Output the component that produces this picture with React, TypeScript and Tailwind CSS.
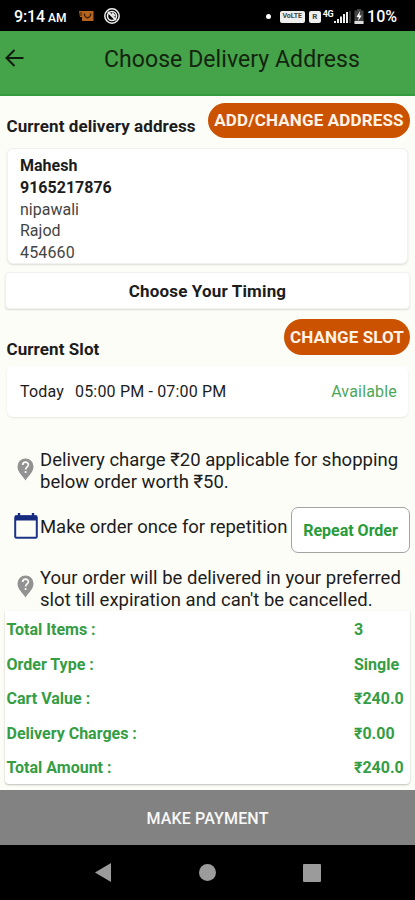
import React from "react";

function HelpPin() {
  return (
    <svg viewBox="0 0 17 23" className="h-[23px] w-[17px] shrink-0">
      <path d="M8.5 0.5A8 8 0 0 0 .5 8.500C.5 14 5 17 8.500 22.600 12 17 16.500 14 16.500 8.500A8 8 0 0 0 8.500.500Z" fill="#929292" />
      <path d="M5.700 7.100C5.700 3.200 11.500 3.200 11.400 6.800C11.300 8.900 8.600 8.900 8.600 11.600" fill="none" stroke="#fdfdf8" strokeWidth="1.700" />
      <circle cx="8.600" cy="14" r="1.100" fill="#fdfdf8" />
    </svg>
  );
}

function Calendar() {
  return (
    <svg viewBox="0 0 24 26" className="mt-[6px] h-[26px] w-6 shrink-0">
      <path d="M5 0V4M19 0V4" stroke="#172b7e" strokeWidth="2.400" />
      <rect x="1.200" y="3.200" width="21.600" height="21.600" rx="1.200" fill="#fdfdf8" stroke="#1c3387" strokeWidth="2" />
      <path d="M1 2.500H23V7.500H1Z" fill="#172b7e" />
    </svg>
  );
}

function StatusBar() {
  return (
    <div className="flex h-[31px] items-center bg-black pt-[2px] pr-[18px] pl-3.5 text-white">
      <span className="text-[16px] font-medium tracking-[-0.1px]">9:14</span>
      <span className="ml-[3px] pt-[3px] text-[12px] font-medium">AM</span>
      <svg viewBox="0 0 15 12" className="-mt-px ml-[12px] h-3 w-[15px]">
        <path d="M0 1H14.500V11H3V7H1Z" fill="#b5651d" />
        <path d="M1 3H3M1 5H3" stroke="#3b1c00" />
        <path d="M5.500 3.500V5.500Q8.500 10 11.500 5.500V3.500" fill="none" stroke="#3b1c00" strokeWidth="1.300" />
      </svg>
      <svg viewBox="0 0 16 16" className="-mt-px ml-2.5 h-4 w-4">
        <circle cx="8" cy="8" r="7.200" fill="none" stroke="#eee" strokeWidth="1.500" />
        <circle cx="8" cy="8" r="4.500" fill="none" stroke="#eee" strokeWidth="1.600" />
        <path d="M4 4L12 12M8 5L11 8" stroke="#eee" strokeWidth="1.800" />
      </svg>
      <span className="-mt-px ml-auto h-[5px] w-[5px] rounded-full bg-white" />
      <span className="ml-[9px] flex h-3 w-[25px] items-center justify-center rounded-[2px] bg-[#eee] text-[7px] font-bold text-[#444]">VoLTE</span>
      <span className="ml-1 flex h-3 w-3 items-center justify-center rounded-[2px] bg-[#eee] text-[8px] font-bold text-[#444]">R</span>
      <span className="ml-0.5 -mt-1 text-[9px] font-bold tracking-[-0.5px]">4G</span>
      <svg viewBox="0 0 17 12" className="ml-px h-3 w-[17px]">
        <path d="M1 10V12M4 8V12M7 5.500V12M10 3V12M13 1V12" stroke="#eee" strokeWidth="2" />
        <path d="M16 0V12" stroke="#444" strokeWidth="1.500" />
      </svg>
      <svg viewBox="0 0 10 15" className="ml-[3px] h-[15px] w-2.5">
        <path d="M3 0H7V1.500H9.500V15H.5V1.500H3Z" fill="#444" />
        <path d="M.5 12H9.500V15H.5Z" fill="#ddd" />
        <path d="M6 2L2.500 8H4.800L4 12L7.800 6.500H5.500Z" fill="#fff" />
      </svg>
      <span className="ml-[3px] text-[16px] font-medium">10%</span>
    </div>
  );
}

const card = "border border-[#f1f1ed] bg-white shadow-[0_1px_2px_rgba(0,0,0,0.13)]";

const totals = [
  ["Total Items :", "3"],
  ["Order Type :", "Single"],
  ["Cart Value :", "₹240.0"],
  ["Delivery Charges :", "₹0.00"],
  ["Total Amount :", "₹240.0"],
];

export default function App() {
  return (
    <div className="flex h-[900px] w-[415px] flex-col overflow-hidden whitespace-nowrap bg-[#fdfdf8] font-[Roboto,'Noto_Sans',sans-serif] text-[#1c1c1c]">
      <StatusBar />
      <header className="flex h-[65px] items-center border-b-2 border-[#359b40] bg-[#45a349] pb-[6px] pl-[5px]">
        <svg viewBox="0 0 19 18" className="-mt-[3px] h-[18px] w-[19px]">
          <path d="M18.500 9H2M9.500 1L1.500 9L9.500 17" fill="none" stroke="#101b10" strokeWidth="2" />
        </svg>
        <h1 className="ml-[80px] pt-px text-[23px] tracking-[0.07px] text-[#14240f]">Choose Delivery Address</h1>
      </header>

      <main className="flex h-[694px] flex-col">
        <div className="flex h-[52px] justify-between pt-[7px] pr-[5px] pl-[6.5px]">
          <h2 className="mt-[11px] text-[17px] leading-6 font-bold tracking-[0.08px]">Current delivery address</h2>
          <button className="h-[35px] w-[202px] rounded-full bg-[#cb5200] text-[17px] font-bold tracking-[0.15px] text-[#fff3e7]">ADD/CHANGE ADDRESS</button>
        </div>
        <section className={`ml-[7px] h-[116px] w-[401px] rounded-[6px] pt-1.5 pl-3 text-[16px] leading-[21.8px] ${card}`}>
          <p className="font-bold">Mahesh</p>
          <p className="font-bold">9165217876</p>
          <p className="text-[#444]">nipawali</p>
          <p className="text-[#444]">Rajod</p>
          <p className="tracking-[0.15px] text-[#444]">454660</p>
        </section>
        <button className={`mt-2 ml-[5px] h-[37px] w-[405px] rounded-[4px] pt-[2px] text-[17px] font-bold tracking-[0.16px] ${card}`}>Choose Your Timing</button>

        <div className="flex h-[57px] justify-between pt-[10px] pr-[5px] pl-[6.5px]">
          <h2 className="mt-[18px] text-[17px] leading-6 font-bold tracking-[0.08px]">Current Slot</h2>
          <button className="h-[36px] w-[126px] rounded-full bg-[#cb5200] pt-[2px] text-[17px] font-bold tracking-[0.1px] text-[#fff3e7]">CHANGE SLOT</button>
        </div>
        <section className="ml-[7px] flex h-[51px] w-[401px] items-center rounded-[6px] bg-white pr-[11px] pl-[13px] text-[16px] tracking-[0.18px] shadow-[0_1px_2px_rgba(0,0,0,0.09)]">
          <span>Today</span>
          <span className="ml-[11px]">05:00 PM - 07:00 PM</span>
          <span className="ml-auto text-[#4ba75a]">Available</span>
        </section>

        <div className="mt-[32px] flex h-[44px] pl-[17px]">
          <div className="mt-[9px]"><HelpPin /></div>
          <p className="ml-[6px] text-[18.5px] leading-[22px]">Delivery charge ₹20 applicable for shopping<br />below order worth ₹50.</p>
        </div>
        <div className="mt-[14px] flex h-[46px] pl-[14px]">
          <Calendar />
          <p className="mt-[9px] ml-[2px] w-[251px] text-[18.5px] leading-[22px] tracking-[-0.03px]">Make order once for repetition</p>
          <button className="h-[46px] w-[119px] rounded-[7px] border border-[#a3a3a3] bg-white pt-[2px] text-[16px] font-bold text-[#289b3b]">Repeat Order</button>
        </div>
        <div className="mt-[14px] flex h-[42px] pl-[17px]">
          <div className="mt-2"><HelpPin /></div>
          <p className="ml-[6px] text-[18.5px] leading-[22px] tracking-[0.02px]">Your order will be delivered in your preferred<br />slot till expiration and can't be cancelled.</p>
        </div>

        <section className="mt-[2px] ml-[5px] h-[173px] w-[405px] rounded-b-[4px] pt-[2px] pl-[1.5px] text-[16px] font-bold text-[#359d43] shadow-[0_1px_2px_rgba(0,0,0,0.25)] bg-white">
          {totals.map(([label, value]) => (
            <div key={label} className="flex h-[34.5px] items-center">
              <span className="w-[347.5px]">{label}</span>
              <span>{value}</span>
            </div>
          ))}
        </section>
      </main>

      <button className="h-[55px] bg-[#828282] pt-[2px] text-[16px] font-medium tracking-[0.15px] text-[#f8f8f8]">MAKE PAYMENT</button>
      <nav className="flex h-[55px] items-center justify-between bg-black pr-[94px] pl-[95px]">
        <svg viewBox="0 0 17 19" className="h-[19px] w-[17px]"><path d="M0 9.500L16 0V19Z" fill="#9b9b9b" /></svg>
        <span className="h-[17px] w-[17px] rounded-full bg-[#9b9b9b]" />
        <span className="h-[18px] w-[18px] rounded-[1px] bg-[#9b9b9b]" />
      </nav>
    </div>
  );
}
